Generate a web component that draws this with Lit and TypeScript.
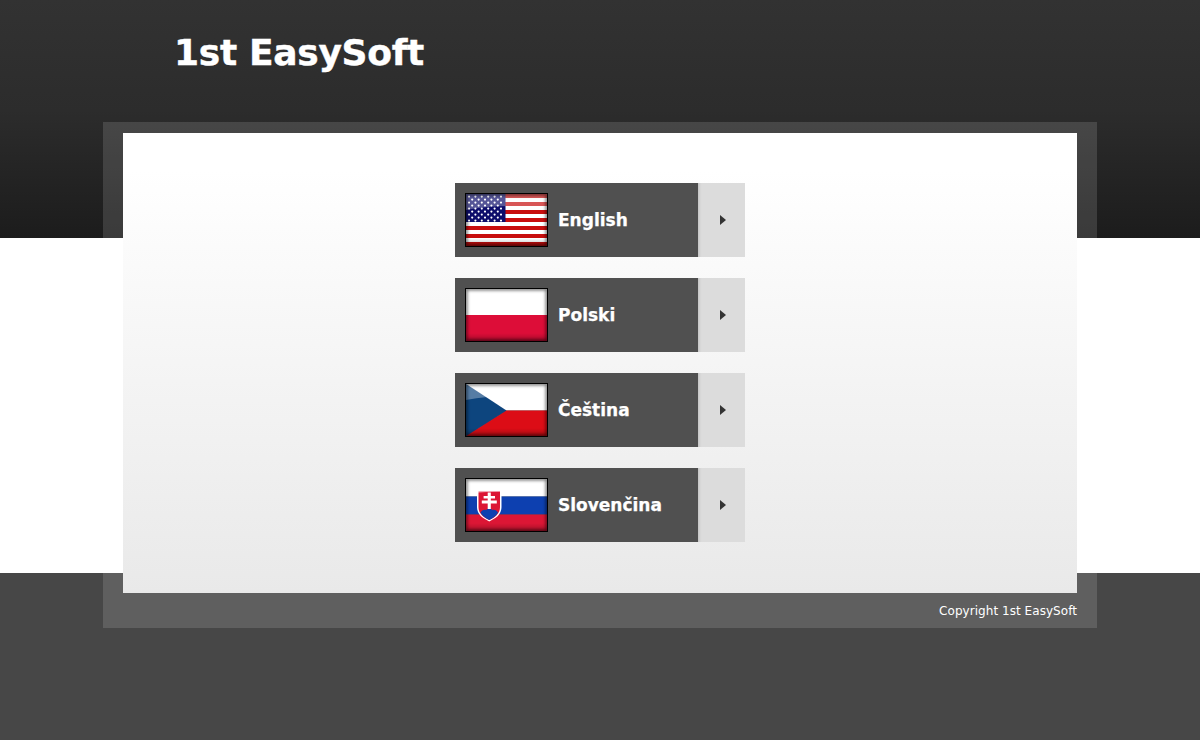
import { LitElement, html, css, svg } from "lit";
import { customElement } from "lit/decorators.js";

const W = 81, H = 52;

const finish = (id: string, art: unknown) => svg`
  <defs>
    <filter id="${id}soft" x="-5%" y="-5%" width="110%" height="110%"><feGaussianBlur stdDeviation="0.3"/></filter>
    <filter id="${id}edge" x="-10%" y="-10%" width="120%" height="120%"><feGaussianBlur stdDeviation="1.6"/></filter>
    <linearGradient id="${id}low" x1="0" x2="0" y1="0" y2="1">
      <stop offset=".85" stop-color="#000" stop-opacity="0"/>
      <stop offset="1" stop-color="#000" stop-opacity=".25"/>
    </linearGradient>
  </defs>
  <g filter="url(#${id}soft)">
    <rect x="-2" y="-2" width="${W + 4}" height="${H + 4}" fill="none" stroke="none"/>
    ${art}
  </g>
  <path d="M0 0H81V14C55 11 25 11 0 16Z" fill="#fff" fill-opacity=".3"/>
  <rect width="${W}" height="${H}" fill="url(#${id}low)"/>
  <rect width="${W}" height="${H}" fill="none" stroke="#000" stroke-width="3" stroke-opacity=".55" filter="url(#${id}edge)"/>`;

const usStripes = () => {
  const out = [];
  const sh = H / 13;
  for (let i = 0; i < 13; i++) {
    out.push(svg`<rect x="-2" y="${i * sh - (i === 0 ? 2 : 0)}" width="${W + 4}" height="${sh + 0.2 + (i === 0 || i === 12 ? 2 : 0)}" fill="${i % 2 ? "#fff" : "#c8070c"}"/>`);
  }
  return out;
};

const usStars = () => {
  const out = [];
  for (let r = 0; r < 9; r++) {
    const odd = r % 2 === 1;
    const n = odd ? 5 : 6;
    for (let c = 0; c < n; c++) {
      out.push(svg`<circle cx="${(odd ? 6.2 : 3) + c * 6.4}" cy="${2.6 + r * 3}" r="1.1" fill="#fff"/>`);
    }
  }
  return out;
};

const flagUs = finish("us", svg`
  ${usStripes()}
  <rect x="-2" y="-2" width="41.5" height="30" fill="#0a0a6a"/>
  ${usStars()}`);

const flagPl = finish("pl", svg`
  <rect x="-2" y="-2" width="${W + 4}" height="28" fill="#fff"/>
  <rect x="-2" y="26" width="${W + 4}" height="28" fill="#dd0c39"/>`);

const flagCz = finish("cz", svg`
  <rect x="-2" y="-2" width="${W + 4}" height="28.5" fill="#fff"/>
  <rect x="-2" y="26.5" width="${W + 4}" height="27.5" fill="#dc1018"/>
  <path d="M-2 -1.3L40.5 26.5L-2 53.3Z" fill="#11457e"/>`);

const flagSk = finish("sk", svg`
  <rect x="-2" y="-2" width="${W + 4}" height="19.5" fill="#fff"/>
  <rect x="-2" y="17.5" width="${W + 4}" height="18" fill="#0b3fb0"/>
  <rect x="-2" y="35.5" width="${W + 4}" height="18.5" fill="#dc1435"/>
  <path d="M11 11H35.5V28C35.5 36 29 39.5 23.25 42.5C17.5 39.5 11 36 11 28Z" fill="#fff"/>
  <path d="M12.5 12.5H34V28C34 35 28.5 38.5 23.25 41C18 38.5 12.5 35 12.5 28Z" fill="#dc1435"/>
  <path d="M14.5 33.5C16.5 30.5 19 30.5 20.2 31.2C21.2 29 25.3 29 26.3 31.2C27.5 30.5 30 30.5 32 33.5C30.5 37 27 39 23.25 41C19.5 39 16 37 14.5 33.5Z" fill="#0b3fb0"/>
  <path d="M21.7 13.5H24.8V17H29V19.6H24.8V21.6H30.8V24.4H24.8V30H21.7V24.4H15.8V21.6H21.7V19.6H17.6V17H21.7Z" fill="#fff"/>`);

const LANGS = [
  { name: "English", flag: flagUs },
  { name: "Polski", flag: flagPl },
  { name: "Čeština", flag: flagCz },
  { name: "Slovenčina", flag: flagSk },
];

@customElement("app-root")
export class AppRoot extends LitElement {
  static styles = css`
    :host {
      display: block;
      height: 740px;
      overflow: hidden;
      font-family: "DejaVu Sans", Verdana, sans-serif;
      background: linear-gradient(#323232 0, #2c2c2c 110px, #1c1c1c 238px, #fff 238px, #fff 573px, #474747 573px, #474747 100%);
    }
    .header {
      height: 122px;
      box-sizing: border-box;
      padding: 30px 0 0 174px;
    }
    h1 {
      margin: 0;
      font-size: 36px;
      line-height: 46px;
      font-weight: 700;
      letter-spacing: -0.3px;
      -webkit-text-stroke: 0.4px #fff;
      color: #fff;
    }
    .frame {
      width: 994px;
      margin: 0 auto;
      box-sizing: border-box;
      padding: 11px 20px 0;
      background: rgba(255, 255, 255, 0.135);
    }
    .panel {
      height: 460px;
      box-sizing: border-box;
      padding-top: 50px;
      display: flex;
      flex-direction: column;
      align-items: center;
      gap: 21px;
      background: linear-gradient(#fff 8%, #e9e9e9);
    }
    .lang {
      width: 290px;
      height: 74px;
      display: flex;
      text-decoration: none;
    }
    .main {
      width: 243px;
      box-sizing: border-box;
      padding-left: 10px;
      display: flex;
      align-items: center;
      gap: 10px;
      background: #505050;
      color: #fff;
      font-size: 17px;
      font-weight: 700;
      -webkit-text-stroke: 0.25px #fff;
    }
    .flag {
      display: block;
      width: 81px;
      height: 52px;
      border: 1px solid #000;
    }
    .go {
      flex: 1;
      box-sizing: border-box;
      padding-left: 2px;
      display: flex;
      align-items: center;
      justify-content: center;
      background: #dcdcdc;
      box-shadow: inset 4px 0 3px -3px rgba(0, 0, 0, 0.14);
    }
    .go svg {
      display: block;
      width: 6px;
      height: 10px;
    }
    .footer {
      height: 35px;
      display: flex;
      align-items: center;
      justify-content: flex-end;
      color: #fff;
      font-size: 12px;
      letter-spacing: 0.05px;
    }
  `;

  render() {
    return html`
      <div class="header"><h1>1st EasySoft</h1></div>
      <div class="frame">
        <div class="panel">
          ${LANGS.map(
            (l) => html`
              <a class="lang" href="#">
                <span class="main">
                  <svg class="flag" viewBox="0 0 ${W} ${H}">${l.flag}</svg>
                  <span>${l.name}</span>
                </span>
                <span class="go">
                  <svg viewBox="0 0 6 10"><path d="M0 0L6 5L0 10Z" fill="#333"/></svg>
                </span>
              </a>
            `
          )}
        </div>
        <div class="footer">Copyright 1st EasySoft</div>
      </div>
    `;
  }
}
